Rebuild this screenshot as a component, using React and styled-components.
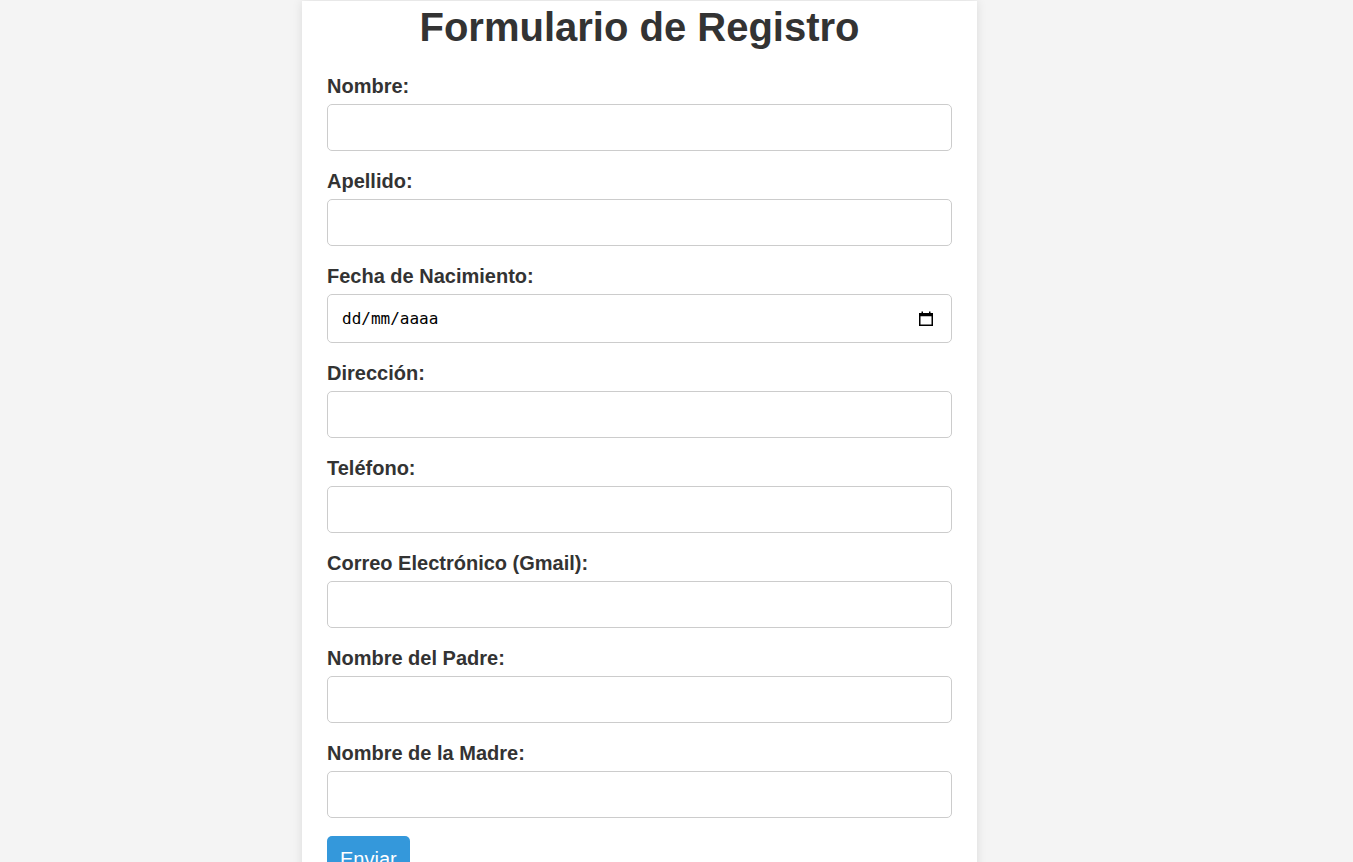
import React from "react";
import styled, { createGlobalStyle } from "styled-components";

const GlobalStyle = createGlobalStyle`
  html, body {
    margin: 0;
    padding: 0;
    background: #f4f4f4;
    font-family: "Liberation Sans", Arial, sans-serif;
  }
  * { box-sizing: border-box; }
`;

const Page = styled.div`
  padding: 1px 0 40px 302px;
`;

const Card = styled.div`
  width: 675px;
  background: #ffffff;
  padding: 3px 25px 30px;
  box-shadow: 0 0 10px rgba(0, 0, 0, 0.1);
`;

const Title = styled.h1`
  margin: 0 0 24px;
  font-size: 40px;
  line-height: 46px;
  font-weight: bold;
  color: #333;
  text-align: center;
`;

const Field = styled.div`
  margin-bottom: 18px;
`;

const Label = styled.label`
  display: block;
  font-size: 20px;
  line-height: 25px;
  font-weight: bold;
  color: #333;
  margin-bottom: 5px;
`;

const Input = styled.input`
  display: block;
  width: 100%;
  height: 47px;
  padding: 12px;
  border: 1px solid #ccc;
  border-radius: 5px;
  font-size: 18px;
  font-family: "Liberation Sans", Arial, sans-serif;
  background: #fff;
  outline: none;
`;

const DateBox = styled.div`
  display: flex;
  align-items: center;
  width: 100%;
  height: 49px;
  padding: 0 18px 0 14px;
  border: 1px solid #ccc;
  border-radius: 5px;
  background: #fff;
`;

const DateInput = styled.input`
  flex: 1;
  border: none;
  outline: none;
  padding: 0;
  font-family: "DejaVu Sans Mono", "Liberation Mono", monospace;
  font-size: 16px;
  color: #000;
  background: transparent;
  &::placeholder {
    color: #000;
    opacity: 1;
  }
`;

const Button = styled.button`
  display: inline-block;
  padding: 12px 13px;
  background: #3498db;
  color: #fff;
  border: none;
  border-radius: 5px;
  font-size: 20px;
  line-height: 23px;
  font-family: "Liberation Sans", Arial, sans-serif;
  cursor: pointer;
`;

const CalendarIcon = () => (
  <svg width="14" height="15" viewBox="0 0 14 15" aria-hidden="true">
    <rect x="0.75" y="2.75" width="12.5" height="11.5" fill="none" stroke="#000" strokeWidth="1.5" />
    <rect x="0.75" y="2.75" width="12.5" height="2.5" fill="#000" />
    <rect x="2.5" y="0.5" width="1.5" height="3" fill="#000" />
    <rect x="10" y="0.5" width="1.5" height="3" fill="#000" />
  </svg>
);

const fields = [
  { id: "nombre", label: "Nombre:", type: "text" },
  { id: "apellido", label: "Apellido:", type: "text" },
  { id: "fecha", label: "Fecha de Nacimiento:", type: "date" },
  { id: "direccion", label: "Dirección:", type: "text" },
  { id: "telefono", label: "Teléfono:", type: "tel" },
  { id: "correo", label: "Correo Electrónico (Gmail):", type: "email" },
  { id: "padre", label: "Nombre del Padre:", type: "text" },
  { id: "madre", label: "Nombre de la Madre:", type: "text" },
];

export default function App() {
  return (
    <>
      <GlobalStyle />
      <Page>
        <Card>
          <Title>Formulario de Registro</Title>
          <form onSubmit={(e) => e.preventDefault()}>
            {fields.map((f) => (
              <Field key={f.id}>
                <Label htmlFor={f.id}>{f.label}</Label>
                {f.type === "date" ? (
                  <DateBox>
                    <DateInput id={f.id} type="text" placeholder="dd/mm/aaaa" />
                    <CalendarIcon />
                  </DateBox>
                ) : (
                  <Input id={f.id} type={f.type} />
                )}
              </Field>
            ))}
            <Button type="submit">Enviar</Button>
          </form>
        </Card>
      </Page>
    </>
  );
}
